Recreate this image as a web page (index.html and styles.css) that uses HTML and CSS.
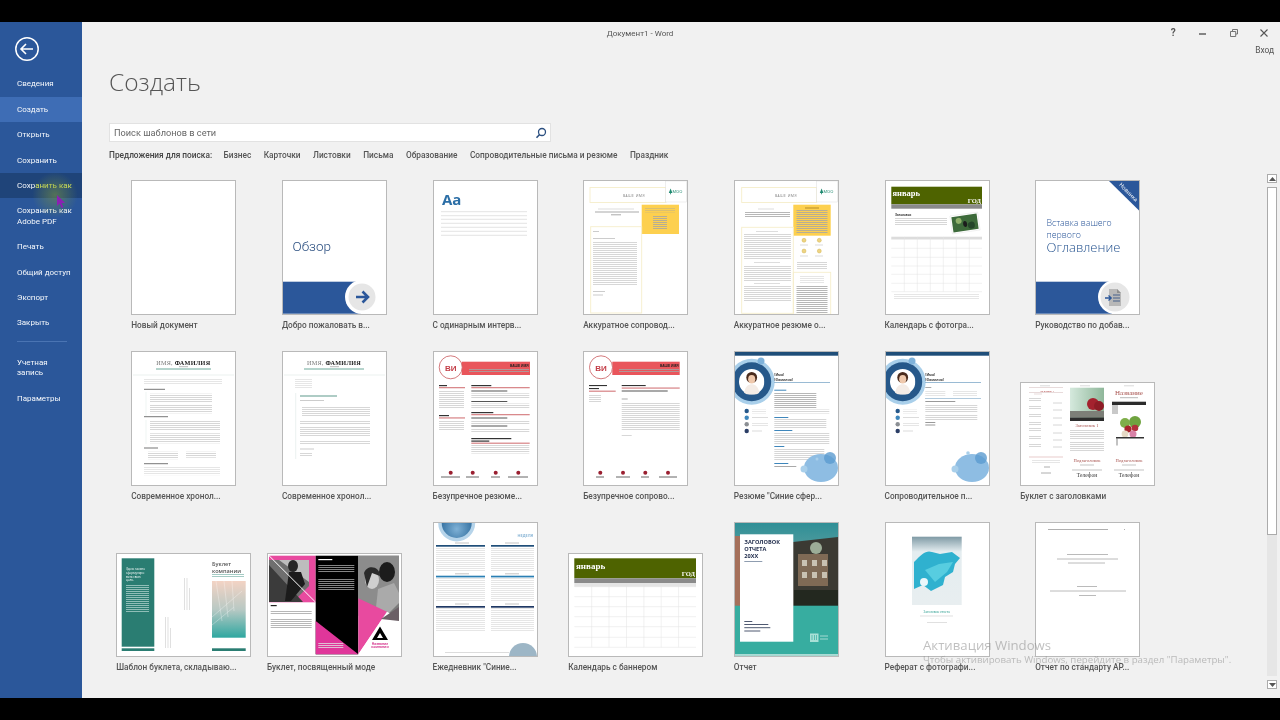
FILE: index.html
```html
<!DOCTYPE html>
<html lang="ru">
<head>
<meta charset="utf-8">
<title>Документ1 - Word</title>
<link rel="stylesheet" href="styles.css">
</head>
<body>
<svg class="defs" aria-hidden="true">
  <defs>
    <pattern id="tx" patternUnits="userSpaceOnUse" width="4" height="2"><rect width="4" height=".8" fill="#cdcdcd"/></pattern>
    <pattern id="txl" patternUnits="userSpaceOnUse" width="4" height="2"><rect width="4" height=".8" fill="#e0e0e0"/></pattern>
    <pattern id="txw" patternUnits="userSpaceOnUse" width="4" height="2"><rect width="4" height=".8" fill="#a9cfc8"/></pattern>
    <pattern id="txk" patternUnits="userSpaceOnUse" width="4" height="2"><rect width="4" height=".8" fill="#a5a5a5"/></pattern>
    <linearGradient id="gBld" x1="0" y1="0" x2="0" y2="1"><stop offset="0" stop-color="#f3d3c4"/><stop offset=".5" stop-color="#b9c9c4"/><stop offset="1" stop-color="#2ea7a0"/></linearGradient>
    <linearGradient id="gSky" x1="0" y1="0" x2="0" y2="1"><stop offset="0" stop-color="#2f8f96"/><stop offset="1" stop-color="#9db7b0"/></linearGradient>
    <linearGradient id="gIce" x1="0" y1="0" x2="0" y2="1"><stop offset="0" stop-color="#7f9aa5"/><stop offset=".22" stop-color="#e4edf0"/><stop offset="1" stop-color="#e8eef0"/></linearGradient>
    <linearGradient id="gApple" x1="0" y1="0" x2="1" y2="0"><stop offset="0" stop-color="#d5e9dd"/><stop offset="1" stop-color="#8fb79a"/></linearGradient>
    <radialGradient id="gBall" cx=".5" cy=".7" r=".7"><stop offset="0" stop-color="#7fb1d6"/><stop offset="1" stop-color="#1f5f92"/></radialGradient>
    <symbol id="head" viewBox="0 0 30 30">
      <circle cx="15" cy="15" r="15" fill="#fff"/>
      <ellipse cx="15" cy="10" rx="6.4" ry="6.6" fill="#4a2c1e"/>
      <ellipse cx="15" cy="12" rx="4.2" ry="5" fill="#efc9ad"/>
      <path d="M6 28c1-7 5-10 9-10s8 3 9 10a15 15 0 0 1-18 0z" fill="#f4ece6"/>
    </symbol>
    <symbol id="moo" viewBox="0 0 21 8">
      <path d="M2.6 1L4.4 5.6H.8z" fill="#1f8a70"/>
      <rect x="2.2" y="5.4" width=".8" height="1.4" fill="#1f8a70"/>
    </symbol>
  </defs>
</svg>

<div class="window">
  <aside class="sidebar">
    <div class="back">
      <svg width="26" height="26" viewBox="0 0 26 26"><circle cx="13" cy="13" r="11.2" fill="none" stroke="#fff" stroke-width="1.5"/><path d="M7 13h12M12 8l-5 5 5 5" fill="none" stroke="#fff" stroke-width="1.6"/></svg>
    </div>
    <nav class="nav">
      <a class="nav-item">Сведения</a>
      <a class="nav-item is-active">Создать</a>
      <a class="nav-item">Открыть</a>
      <a class="nav-item">Сохранить</a>
      <a class="nav-item is-hover">Сохр<span class="lit">анить как</span></a>
      <a class="nav-item">Сохранить как<br>Adobe PDF</a>
      <a class="nav-item">Печать</a>
      <a class="nav-item">Общий доступ</a>
      <a class="nav-item">Экспорт</a>
      <a class="nav-item">Закрыть</a>
      <div class="nav-sep"></div>
      <a class="nav-item">Учетная<br>запись</a>
      <a class="nav-item">Параметры</a>
    </nav>
    <div class="halo"></div>
    <svg class="cursor" width="10" height="14" viewBox="0 0 10 14"><path d="M1 0v11l2.6-2.4L5.6 13l1.8-.9L5.4 8H9z" fill="#8c1fb4"/></svg>
  </aside>

  <main class="main">
    <header class="titlebar">
      <div class="doc-title">Документ1 - Word</div>
      <div class="controls">
        <span class="ctl ctl-help">?</span>
        <svg class="ctl" width="10" height="10" viewBox="0 0 10 10"><path d="M1 6h7" stroke="#555" stroke-width="1.4"/></svg>
        <svg class="ctl" width="10" height="10" viewBox="0 0 10 10"><path d="M3.500 3V1.500h5V6H7M1.500 3.500h5.200V8.500H1.500z" fill="none" stroke="#666" stroke-width=".9"/></svg>
        <svg class="ctl" width="10" height="10" viewBox="0 0 10 10"><path d="M1.500 1.500l7 7M8.500 1.500l-7 7" stroke="#555" stroke-width="1.1"/></svg>
      </div>
    </header>
    <div class="signin">Вход</div>
    <h1 class="page-title">Создать</h1>
    <div class="search">
      <span class="search-text">Поиск шаблонов в сети</span>
      <svg width="12" height="12" viewBox="0 0 12 12"><circle cx="7" cy="5" r="3.500" fill="none" stroke="#2b4f80" stroke-width="1.300"/><path d="M4.600 7.500L1.500 10.800" stroke="#2b4f80" stroke-width="1.600"/></svg>
    </div>
    <div class="suggest">
      <span class="suggest-head">Предложения для поиска:</span>
      <span>Бизнес</span><span>Карточки</span><span>Листовки</span><span>Письма</span><span>Образование</span><span>Сопроводительные письма и резюме</span><span>Праздник</span>
    </div>

    <section class="gallery">
      <div class="grid">

        <div class="cell"><div class="card"><div class="thumb"></div><div class="label">Новый документ</div></div></div>

        <div class="cell"><div class="card"><div class="thumb"><svg class="pg" viewBox="1 1 103 133">
          <text x="10.500" y="71" class="obzor">Обзор</text>
          <rect x="1" y="101.700" width="78" height="32" fill="#2b579a"/>
          <circle cx="80" cy="117" r="17" fill="#fff"/><circle cx="80" cy="117" r="13.500" fill="#e6e6e6"/>
          <path d="M74 117h11M80.500 111.500l5.500 5.500-5.500 5.500" fill="none" stroke="#2b579a" stroke-width="2.600"/>
        </svg></div><div class="label">Добро пожаловать в...</div></div></div>

        <div class="cell"><div class="card"><div class="thumb"><svg class="pg" viewBox="1 1 103 133">
          <text x="9" y="24.500" class="aa">Aa</text>
          <path d="M8 31.700h86M8 35.700h86M8 39.300h86M8 43.300h86M8 47.300h86M8 51.300h86M8 55.300h86" stroke="#dcdcdc" stroke-width=".8"/>
        </svg></div><div class="label">С одинарным интерв...</div></div></div>

        <div class="cell"><div class="card"><div class="thumb"><svg class="pg" viewBox="1 1 103 133">
          <rect x="7" y="7.500" width="76" height="15" class="frame"/>
          <text x="51" y="16.500" class="name-sp">ВАШЕ ИМЯ</text>
          <rect x="82.700" y="1" width="21" height="21" fill="#fff" stroke="#dedede" stroke-width=".5"/>
          <use href="#moo" x="85" y="7.500" width="21" height="8"/><text x="89.500" y="13" class="moo">MOO</text>
          <rect x="58.700" y="24.700" width="37.300" height="29.300" fill="#fdd04f"/>
          <rect x="62" y="27.500" width="30" height="5" fill="url(#txk)" opacity=".5"/>
          <rect x="70" y="35" width="14" height="14" fill="url(#txk)"/>
          <rect x="15" y="28.500" width="36" height="1" fill="#ddd"/><rect x="12" y="31.500" width="44" height="1" fill="#aaa"/><rect x="28" y="34.300" width="10" height="1" fill="#aaa"/>
          <rect x="7.700" y="46.700" width="51" height="86.300" class="frame"/>
          <rect x="10" y="51" width="6" height="1" fill="#ccc"/><rect x="10" y="58" width="22" height="1" fill="#ccc"/>
          <rect x="10" y="61" width="44" height="44" fill="url(#tx)"/>
          <rect x="10" y="111" width="12" height="1" fill="#ccc"/><rect x="10" y="114.500" width="10" height="1" fill="#ccc"/>
        </svg></div><div class="label">Аккуратное сопровод...</div></div></div>

        <div class="cell"><div class="card"><div class="thumb"><svg class="pg" viewBox="1 1 103 133">
          <rect x="7.700" y="7.500" width="75" height="15" class="frame"/>
          <text x="52" y="16.500" class="name-sp">ВАШЕ ИМЯ</text>
          <rect x="82.700" y="1" width="21" height="21" fill="#fff" stroke="#dedede" stroke-width=".5"/>
          <use href="#moo" x="85" y="7.500" width="21" height="8"/><text x="89.500" y="13" class="moo">MOO</text>
          <rect x="59.300" y="24.700" width="37.400" height="31" fill="#fdd04f"/>
          <rect x="71" y="27.500" width="14" height="1" fill="#b58b2a"/><rect x="62.500" y="30" width="31" height="24" fill="url(#txk)"/>
          <rect x="24" y="28.500" width="16" height="1" fill="#ddd"/><rect x="11" y="31" width="45" height="7" fill="url(#txk)"/>
          <rect x="7.700" y="47.300" width="51.600" height="86" class="frame"/>
          <rect x="22" y="51" width="22" height="1" fill="#ddd"/><rect x="10" y="54" width="47" height="26" fill="url(#tx)"/>
          <rect x="20" y="82" width="26" height="1" fill="#ddd"/><rect x="10" y="85" width="47" height="17" fill="url(#tx)"/>
          <rect x="20" y="103" width="26" height="1" fill="#ddd"/><rect x="10" y="106" width="47" height="16" fill="url(#tx)"/>
          <g fill="#eed483" stroke="#c9a83a" stroke-width=".4"><circle cx="70" cy="60.300" r="2"/><circle cx="85.300" cy="60.300" r="2"/><circle cx="70" cy="71" r="2"/><circle cx="85.300" cy="71" r="2"/></g>
          <path d="M66 65h8M81 65h8M66 76h8M81 76h8" stroke="#ccc" stroke-width=".7"/>
          <rect x="63" y="82" width="30" height="8" fill="url(#tx)"/>
          <rect x="59.300" y="92.300" width="37.400" height="42" class="frame"/>
          <rect x="66" y="95" width="24" height="8" fill="url(#txl)"/><rect x="62.500" y="106" width="31" height="27" fill="url(#txk)"/>
        </svg></div><div class="label">Аккуратное резюме о...</div></div></div>

        <div class="cell"><div class="card"><div class="thumb"><svg class="pg" viewBox="1 1 103 133">
          <rect x="6.300" y="6.700" width="90.700" height="17.600" fill="#4e6300"/><rect x="6.300" y="24.300" width="90.700" height="4.400" fill="#8a8a8a"/>
          <text x="7.500" y="16" class="cal-m">январь</text><text x="96" y="22.500" class="cal-y">ГОД</text>
          <text x="10" y="36" class="cal-h">Заголовок</text>
          <rect x="10" y="37.500" width="52" height="8" fill="url(#tx)"/>
          <g transform="rotate(-8 80 43)"><rect x="66" y="34" width="28" height="18" fill="#fff" stroke="#ddd" stroke-width=".4"/><rect x="67.300" y="35.300" width="25.400" height="15.400" fill="#3d6a3a"/><circle cx="74" cy="40" r="3" fill="#8fb06a"/><circle cx="86" cy="46" r="3.500" fill="#25462a"/><ellipse cx="80" cy="44" rx="2" ry="3" fill="#1c1c1c"/></g>
          <rect x="6.300" y="56.700" width="90.700" height="2.600" fill="#dcdcdc"/>
          <path d="M6.300 59.300h90.700M6.300 68.300h90.700M6.300 77.300h90.700M6.300 86h90.700M6.300 94.300h90.700M6.300 103.300h90.700M6.300 111.700h90.700M19.300 56.700v55M32.300 56.700v55M45.300 56.700v55M58.300 56.700v55M71.300 56.700v55M84.300 56.700v55" class="cal-grid"/>
          <rect x="9" y="114" width="85" height="5.500" fill="url(#txl)"/>
        </svg></div><div class="label">Календарь с фотогра...</div></div></div>

        <div class="cell"><div class="card"><div class="thumb"><svg class="pg" viewBox="1 1 103 133">
          <path d="M74 1h30v29.500z" fill="#2b579a"/>
          <text class="newb" transform="translate(92.100 13.500) rotate(45)">Новинка</text>
          <text x="11.500" y="46" class="toc-s">Вставка вашего</text><text x="11.500" y="58" class="toc-s">первого</text><text x="11.500" y="72" class="toc-b">Оглавление</text>
          <rect x="1" y="101.700" width="76" height="32" fill="#2b579a"/>
          <circle cx="80" cy="117" r="17" fill="#fff"/><circle cx="80" cy="117" r="14.500" fill="#e6e6e6"/>
          <path d="M74 109h8l4 4v13H74z" fill="#b8b8b8"/><path d="M82 109l4 4h-4z" fill="#8e8e8e"/>
          <path d="M70 118h6M73.500 115.500l2.700 2.500-2.700 2.500" fill="none" stroke="#2b579a" stroke-width="1.300"/>
          <path d="M78 115h7M78 118h7M78 121h7" stroke="#47618a" stroke-width="1.100"/>
        </svg></div><div class="label">Руководство по добав...</div></div></div>

        <div class="cell"><div class="card"><div class="thumb"><svg class="pg" viewBox="1 1 103 133">
          <text x="52.300" y="14" class="res-name"><tspan class="res-l">ИМЯ, </tspan>ФАМИЛИЯ</text>
          <path d="M48 15.700h9" stroke="#aaa" stroke-width=".8"/><path d="M25 18h55" stroke="#6da99a" stroke-width="1"/><path d="M2 24h101" stroke="#e6eeeb" stroke-width=".8"/>
          <rect x="13" y="27.300" width="78" height="6" fill="url(#txl)"/>
          <rect x="13" y="37.800" width="21" height="1" fill="#777"/>
          <path d="M15 41v24M15 69v24" stroke="#dde8e5" stroke-width=".5"/>
          <rect x="19" y="42.700" width="62" height="8.500" fill="url(#tx)"/><rect x="19" y="53.300" width="62" height="9" fill="url(#tx)"/>
          <rect x="13" y="65.200" width="24" height="1" fill="#777"/>
          <rect x="19" y="70" width="70" height="10" fill="url(#tx)"/><rect x="19" y="82.300" width="70" height="10" fill="url(#tx)"/>
          <rect x="13" y="96.500" width="14" height="1" fill="#777"/>
          <rect x="17" y="100.700" width="30" height="7.500" fill="url(#tx)"/><rect x="55" y="100.700" width="30" height="6" fill="url(#tx)"/>
          <rect x="13" y="112.200" width="24" height="1" fill="#777"/>
          <rect x="13" y="115.700" width="76" height="8.500" fill="url(#txl)"/>
        </svg></div><div class="label">Современное хронол...</div></div></div>

        <div class="cell"><div class="card"><div class="thumb"><svg class="pg" viewBox="1 1 103 133">
          <text x="52" y="14" class="res-name"><tspan class="res-l">ИМЯ, </tspan>ФАМИЛИЯ</text>
          <path d="M48 15.700h9" stroke="#aaa" stroke-width=".8"/><path d="M22 18h60" stroke="#6da99a" stroke-width="1"/><path d="M2 24h101" stroke="#e6eeeb" stroke-width=".8"/>
          <rect x="13" y="27.300" width="17" height="10.500" fill="url(#txl)"/>
          <path d="M13.700 42v66" stroke="#dde8e5" stroke-width=".6"/>
          <rect x="18" y="44.500" width="37" height="1" fill="#5f9a8c"/>
          <rect x="18" y="49" width="24" height="1" fill="#ccc"/>
          <rect x="20" y="55.700" width="68" height="9.500" fill="url(#tx)"/>
          <rect x="18" y="69.500" width="70" height="4" fill="url(#tx)"/><rect x="18" y="76" width="70" height="10" fill="url(#tx)"/>
          <rect x="18" y="90" width="70" height="4" fill="url(#tx)"/><rect x="18" y="97.500" width="14" height="1" fill="#ccc"/>
          <rect x="18" y="102" width="12" height="3.500" fill="url(#tx)"/>
        </svg></div><div class="label">Современное хронол...</div></div></div>

        <div class="cell"><div class="card"><div class="thumb"><svg class="pg" viewBox="1 1 103 133">
          <rect x="28.700" y="10.700" width="68.300" height="13.300" fill="#e9555b"/>
          <circle cx="17.700" cy="16.300" r="11.500" fill="#fff" stroke="#c9585c" stroke-width=".8"/>
          <text x="17.700" y="19.500" class="vi">ВИ</text>
          <text x="95.500" y="15.500" class="vn">ВАШЕ ИМЯ</text>
          <rect x="36" y="17.500" width="60" height="4" fill="url(#txk)"/>
          <rect x="6" y="34" width="8" height="1.200" fill="#333"/><rect x="6" y="36.300" width="26" height=".9" fill="#c9585c"/>
          <rect x="6" y="39" width="25" height="18" fill="url(#tx)"/>
          <rect x="6" y="64" width="10" height="1.200" fill="#333"/><rect x="6" y="66.500" width="26" height=".9" fill="#c9585c"/>
          <rect x="6" y="69" width="25" height="10" fill="url(#tx)"/>
          <rect x="38.300" y="34" width="20" height="1.200" fill="#333"/><rect x="38.300" y="36.300" width="58.400" height=".9" fill="#c9585c"/>
          <rect x="38.300" y="39.500" width="36" height="1" fill="#555"/><rect x="38.300" y="42.300" width="58" height="5" fill="url(#tx)"/>
          <rect x="38.300" y="50" width="36" height="1" fill="#555"/><rect x="38.300" y="52.500" width="58" height="4.500" fill="url(#tx)"/>
          <rect x="38.300" y="61" width="22" height="1.200" fill="#333"/><rect x="38.300" y="63.300" width="58.400" height=".9" fill="#c9585c"/>
          <rect x="38.300" y="66.500" width="36" height="1" fill="#555"/><rect x="38.300" y="69" width="58" height="4" fill="url(#tx)"/>
          <rect x="38.300" y="74.500" width="36" height="1" fill="#555"/><rect x="38.300" y="77" width="58" height="4" fill="url(#tx)"/>
          <rect x="38.300" y="87" width="40" height="1.200" fill="#333"/><rect x="38.300" y="89.500" width="18" height="1.200" fill="#333"/><rect x="38.300" y="91.700" width="58.400" height=".9" fill="#c9585c"/>
          <rect x="38.300" y="94" width="58" height="8.500" fill="url(#tx)"/>
          <g fill="#9a1f30"><circle cx="17.700" cy="121.700" r="2"/><circle cx="39.700" cy="121.700" r="2"/><circle cx="62.700" cy="121.700" r="2"/><circle cx="85.300" cy="121.700" r="2"/></g>
          <path d="M8 126h19M33 126h13M58 126h9M75 126h20" stroke="#555" stroke-width=".9"/>
        </svg></div><div class="label">Безупречное резюме...</div></div></div>

        <div class="cell"><div class="card"><div class="thumb"><svg class="pg" viewBox="1 1 103 133">
          <rect x="29.300" y="10.700" width="67.400" height="13.300" fill="#e9555b"/>
          <circle cx="18" cy="16.300" r="11.500" fill="#fff" stroke="#c9585c" stroke-width=".8"/>
          <text x="18" y="19.500" class="vi">ВИ</text>
          <text x="95.500" y="15.500" class="vn">ВАШЕ ИМЯ</text>
          <rect x="36" y="17.500" width="60" height="4" fill="url(#txk)"/>
          <rect x="6" y="34" width="18" height="1.100" fill="#333"/><rect x="6" y="37" width="10" height="1.100" fill="#333"/><rect x="6" y="39.700" width="26.700" height=".9" fill="#c9585c"/>
          <rect x="6" y="43" width="12" height="8" fill="url(#tx)"/>
          <rect x="38.700" y="34" width="24" height="1.100" fill="#333"/><rect x="38.700" y="36.600" width="58" height=".9" fill="#c9585c"/>
          <rect x="38.700" y="39.500" width="46" height="1" fill="#555"/>
          <rect x="38.700" y="47.500" width="6" height="1" fill="#aaa"/>
          <rect x="38.700" y="51" width="58" height="29" fill="url(#tx)"/>
          <rect x="38.700" y="83" width="10" height="3" fill="url(#tx)"/>
          <g fill="#9a1f30"><circle cx="17.300" cy="121.700" r="2"/><circle cx="40" cy="121.700" r="2"/><circle cx="62.300" cy="121.700" r="2"/><circle cx="85" cy="121.700" r="2"/></g>
          <path d="M13 126h8M33 126h14M58 126h8M76 126h18" stroke="#555" stroke-width=".9"/>
        </svg></div><div class="label">Безупречное сопрово...</div></div></div>

        <div class="cell"><div class="card"><div class="thumb"><svg class="pg" viewBox="1 1 103 133">
          <circle cx="17.700" cy="30.700" r="23" fill="#a9cfea"/><circle cx="17.700" cy="30.700" r="19.500" fill="#26588a"/>
          <circle cx="27" cy="10" r="3.500" fill="#7fb2da"/>
          <use href="#head" x="5" y="18" width="25.400" height="25.400"/>
          <rect x="1" y=".7" width="103" height="4" fill="#1f4e79"/>
          <text x="40.300" y="24.700" class="ph">[Имя]</text><text x="40.300" y="29.700" class="ph">[Фамилия]</text>
          <path d="M40 31.500h56" stroke="#8fb3cf" stroke-width=".9"/>
          <rect x="40.300" y="38.700" width="12" height="1" fill="#3e86bb"/>
          <rect x="40.300" y="41" width="42" height="17" fill="url(#txk)"/><rect x="40.300" y="58.500" width="55" height="4" fill="url(#tx)"/>
          <rect x="40.300" y="66" width="14" height="1" fill="#3e86bb"/><rect x="40.300" y="68" width="52" height="9" fill="url(#tx)"/>
          <rect x="40.300" y="79" width="18" height="1" fill="#3e86bb"/><rect x="40.300" y="81" width="55" height="12" fill="url(#tx)"/>
          <rect x="40.300" y="95" width="10" height="1" fill="#3e86bb"/><rect x="40.300" y="97.500" width="50" height="12" fill="url(#tx)"/>
          <rect x="40.300" y="112" width="14" height="1" fill="#3e86bb"/><rect x="40.300" y="115" width="22" height="1" fill="#a9a9a9"/>
          <circle cx="12.700" cy="60" r="2.200" fill="#26588a"/><circle cx="12.700" cy="66.700" r="2.200" fill="#3e86bb"/><circle cx="12.700" cy="73.300" r="2.200" fill="#8b8f94"/><circle cx="12.700" cy="80" r="2.200" fill="#2b3e66"/>
          <rect x="18" y="58.500" width="14" height="4" fill="url(#txl)"/><rect x="18" y="66" width="16" height="1" fill="#dcdcdc"/><rect x="18" y="72" width="16" height="3" fill="url(#txl)"/><rect x="18" y="79.500" width="10" height="1" fill="#dcdcdc"/>
          <ellipse cx="87" cy="117" rx="17" ry="14" fill="#8ebde3"/><circle cx="96" cy="107" r="6" fill="#5b9bcf" opacity=".8"/><circle cx="70" cy="118" r="3.500" fill="#a9cfea"/><circle cx="83" cy="108" r="1.500" fill="#a9cfea"/>
        </svg></div><div class="label">Резюме "Синие сфер...</div></div></div>

        <div class="cell"><div class="card"><div class="thumb"><svg class="pg" viewBox="1 1 103 133">
          <circle cx="17.700" cy="30.700" r="23" fill="#a9cfea"/><circle cx="17.700" cy="30.700" r="19.500" fill="#26588a"/>
          <circle cx="27" cy="10" r="3.500" fill="#7fb2da"/>
          <use href="#head" x="5" y="18" width="25.400" height="25.400"/>
          <rect x="1" y=".7" width="103" height="4" fill="#1f4e79"/>
          <text x="40.300" y="24.700" class="ph">[Имя]</text><text x="40.300" y="29.700" class="ph">[Фамилия]</text>
          <path d="M40 31.500h56" stroke="#8fb3cf" stroke-width=".9"/>
          <rect x="40.300" y="36" width="6" height="1" fill="#a9a9a9"/>
          <rect x="40.300" y="40" width="20" height="6" fill="url(#txl)"/><rect x="68" y="40" width="24" height="6" fill="url(#txl)"/>
          <path d="M40 47.500h56" stroke="#8fb3cf" stroke-width=".7"/>
          <rect x="40.300" y="50" width="30" height="1" fill="#999"/>
          <rect x="40.300" y="53" width="52" height="8" fill="url(#tx)"/><rect x="40.300" y="63" width="52" height="6" fill="url(#tx)"/>
          <rect x="40.300" y="71" width="10" height="1" fill="#999"/><rect x="40.300" y="73.500" width="10" height="1" fill="#999"/>
          <circle cx="12.700" cy="60" r="2.200" fill="#26588a"/><circle cx="12.700" cy="66.700" r="2.200" fill="#3e86bb"/><circle cx="12.700" cy="73.300" r="2.200" fill="#8b8f94"/><circle cx="12.700" cy="80" r="2.200" fill="#2b3e66"/>
          <rect x="18" y="58.500" width="14" height="4" fill="url(#txl)"/><rect x="18" y="66" width="16" height="1" fill="#dcdcdc"/><rect x="18" y="72" width="16" height="3" fill="url(#txl)"/><rect x="18" y="79.500" width="10" height="1" fill="#dcdcdc"/>
          <ellipse cx="87" cy="117" rx="17" ry="14" fill="#8ebde3"/><circle cx="96" cy="107" r="6" fill="#5b9bcf" opacity=".8"/><circle cx="70" cy="118" r="3.500" fill="#a9cfea"/><circle cx="83" cy="102" r="1.800" fill="#a9cfea"/>
        </svg></div><div class="label">Сопроводительное п...</div></div></div>

        <div class="cell"><div class="card"><div class="thumb thumb-wide"><svg class="pg" viewBox="1 1 133 102">
          <path d="M20 3.800h10M60 3.800h10M104 3.800h10" stroke="#ccc" stroke-width=".7"/>
          <text x="27" y="9.500" class="bk-s">Заголовок 1</text>
          <path d="M9 5.500h34M9 10.500h34M14 12h8" stroke="#d8c3c3" stroke-width=".6"/>
          <rect x="9" y="16" width="12" height="4" fill="url(#tx)"/><rect x="9" y="24" width="12" height="4" fill="url(#tx)"/><rect x="9" y="31" width="12" height="4" fill="url(#tx)"/><rect x="9" y="39" width="12" height="4" fill="url(#tx)"/><rect x="9" y="46" width="12" height="4" fill="url(#tx)"/><rect x="9" y="54" width="12" height="4" fill="url(#tx)"/><rect x="9" y="61" width="12" height="4" fill="url(#tx)"/>
          <path d="M33 21h9M33 28h9M33 36h9M33 43h9M33 51h9M33 58h9M33 65h9" stroke="#ccc" stroke-width=".8"/>
          <path d="M9 75h34" stroke="#d8a9a9" stroke-width=".6"/><rect x="12" y="77" width="28" height="5" fill="url(#txl)"/>
          <path d="M24 85h6M21 91h10" stroke="#999" stroke-width=".8"/>
          <rect x="50" y="5.700" width="34" height="33.300" fill="url(#gApple)"/>
          <circle cx="73" cy="22" r="6" fill="#a4222e"/><circle cx="79" cy="24" r="5" fill="#8e1c26"/><rect x="50" y="29" width="34" height="6.500" fill="#7d7f78"/><rect x="50" y="35.500" width="34" height="3.500" fill="#2c2c2c"/>
          <text x="67" y="45" class="bk-h">Заголовок 1</text>
          <rect x="50" y="48" width="34" height="10" fill="url(#tx)"/><rect x="50" y="60" width="34" height="9.500" fill="url(#tx)"/>
          <text x="67" y="80" class="bk-h">Подзаголовок</text><path d="M60 83h14M52 88h30" stroke="#aaa" stroke-width=".7"/>
          <text x="67" y="94.500" class="bk-t">Телефон</text>
          <text x="109" y="13" class="bk-n">Название</text><path d="M100 15.700h18" stroke="#999" stroke-width=".7"/>
          <rect x="92" y="19.700" width="34" height="3.300" fill="#2c2c2c"/>
          <rect x="92" y="23" width="6" height="9" fill="#c9c9c9"/>
          <circle cx="115" cy="40" r="6" fill="#6fa33f"/><circle cx="105" cy="41" r="5" fill="#7fae4a"/>
          <circle cx="108" cy="47" r="3.600" fill="#a8242c"/><circle cx="115" cy="46" r="3.300" fill="#b22f3a"/><circle cx="105" cy="52" r="3.400" fill="#e5d9c5"/><circle cx="113" cy="52" r="3.500" fill="#d982a8"/><rect x="96" y="55" width="28" height="1.500" fill="#333"/><path d="M97 56.500v7" stroke="#333" stroke-width=".6"/>
          <text x="109" y="80" class="bk-h">Подзаголовок</text><path d="M102 83h14M94 88h30" stroke="#aaa" stroke-width=".7"/>
          <text x="109" y="94.500" class="bk-t">Телефон</text>
        </svg></div><div class="label">Буклет с заголовками</div></div></div>

        <div class="cell"><div class="card"><div class="thumb thumb-wide"><svg class="pg" viewBox="1 1 133 102">
          <rect x="5.700" y="5.300" width="32.600" height="88.400" fill="#2a7d72"/><rect x="5.700" y="95.300" width="32.600" height="2.700" fill="#2a7d72"/>
          <text class="tl-t" x="10" y="17">Здесь можно</text><text class="tl-t" x="10" y="20.800">сформулиро</text><text class="tl-t" x="10" y="24.600">вать свою</text><text class="tl-t" x="10" y="28.400">цель.</text>
          <rect x="10" y="31" width="23" height="29" fill="url(#txw)"/>
          <path d="M49.500 64v31M52 64v31M54.500 75v20M68.500 25v32M71 25v32M73.500 35v22" stroke="#d2d2d2" stroke-width=".7"/>
          <text x="96" y="13" class="tl-h">Буклет</text><text x="96" y="19.500" class="tl-h">компании</text>
          <path d="M96 21.500h32M96 23.500h32" stroke="#7cb5ab" stroke-width=".7"/>
          <rect x="96" y="28" width="33.700" height="56.700" fill="url(#gBld)"/>
          <path d="M100 28l6 40M108 28l4 36M116 28l2 30M96 72l22-18M96 64l30-26" stroke="#fff" stroke-width=".5" opacity=".6"/>
          <rect x="96" y="95.300" width="33.700" height="2.700" fill="#2a7d72"/>
        </svg></div><div class="label">Шаблон буклета, складываю...</div></div></div>

        <div class="cell"><div class="card"><div class="thumb thumb-wide"><svg class="pg" viewBox="1 1 133 102">
          <rect x="2" y="2.700" width="46.700" height="46.600" fill="#e84a9f"/>
          <path d="M2 7h40v26l-16 16H2z" fill="#6f6f6f"/>
          <path d="M2 7h40v22L12 7z" fill="#bdbdbd"/><path d="M2 12l34 37H2z" fill="#3b3b3b"/>
          <ellipse cx="26" cy="13" rx="5" ry="6" fill="#262626"/><path d="M18 48l4-29h12l4 12-14 17z" fill="#1b1b1b"/>
          <path d="M2 2.700l46.700 46.600" stroke="#fff" stroke-width="1"/>
          <rect x="3.700" y="52" width="6" height="1.200" fill="#222"/><rect x="3.700" y="57" width="41" height="5" fill="url(#txk)"/><rect x="3.700" y="65" width="41" height="10" fill="url(#txk)"/>
          <rect x="48.700" y="2.700" width="42.600" height="98.600" fill="#000"/>
          <path d="M48.700 68l42.600 33.300H48.700z" fill="#e0369a"/>
          <rect x="51.300" y="6" width="14" height="1.200" fill="#fff"/><rect x="51.300" y="11" width="36" height="8.500" fill="url(#txk)"/><rect x="51.300" y="25" width="36" height="12" fill="url(#txk)"/>
          <rect x="51.300" y="89" width="25" height="6" fill="url(#txl)"/>
          <rect x="91.300" y="2.700" width="40.700" height="60" fill="#7a7a7a"/>
          <path d="M91.300 2.700h40.700v40l-18 20H91.300z" fill="#8c8c8c"/>
          <ellipse cx="120" cy="19" rx="8" ry="10" fill="#1c1c1c"/><path d="M108 64l3-28 16-6 5 10v10l-14 14z" fill="#aaa"/>
          <ellipse cx="105" cy="27" rx="7" ry="9" fill="#cfcfcf"/><path d="M97 20c3-9 16-7 16 3l-8-3-5 14z" fill="#2a2a2a"/>
          <path d="M91.300 45.300L120 58.700 91.300 101.300z" fill="#e84a9f"/>
          <path d="M91.300 101.300L120 58.700 132 66v35.300z" fill="#fff"/>
          <path d="M114 66l18-12v14z" fill="#6b5f66"/>
          <path d="M113 73.500l8 13.500h-16zM113 80l-3 5h6z" fill="#000" fill-rule="evenodd"/>
          <text x="113" y="91.500" class="fs-t">Название</text><text x="113" y="95" class="fs-t">компании</text>
        </svg></div><div class="label">Буклет, посвященный моде</div></div></div>

        <div class="cell"><div class="card"><div class="thumb"><svg class="pg" viewBox="1 1 103 133">
          <circle cx="23.700" cy="1" r="18.500" fill="#b6d4ea"/><circle cx="23.700" cy="1" r="15" fill="url(#gBall)"/>
          <text x="100" y="15" class="wk">НЕДЕЛЯ</text>
          <g fill="#1f4e79"><rect x="3" y="23" width="49" height="1.700"/><rect x="58" y="23" width="43" height="1.700"/></g>
          <g fill="#2a7fb4"><rect x="3" y="53.700" width="49" height="1.700"/><rect x="58" y="53.700" width="43" height="1.700"/></g>
          <g fill="#1f3864"><rect x="3" y="84" width="49" height="1.700"/><rect x="58" y="84" width="43" height="1.700"/></g>
          <path d="M22 21h14M72 21h14M22 51.800h14M72 51.800h14M22 82h14M72 82h14" stroke="#aaa" stroke-width=".7"/>
          <g class="wk-lines"><rect x="3" y="25" width="49" height="24"/><rect x="58" y="25" width="43" height="24"/><rect x="3" y="56" width="49" height="24"/><rect x="58" y="56" width="43" height="24"/><rect x="3" y="86" width="49" height="24"/><rect x="58" y="86" width="43" height="24"/></g>
          <circle cx="90" cy="135" r="14" fill="#9db6c6"/>
          <path d="M12 130.500h64" stroke="#dcdcdc" stroke-width="1.200"/>
        </svg></div><div class="label">Ежедневник "Синие...</div></div></div>

        <div class="cell"><div class="card"><div class="thumb thumb-wide"><svg class="pg" viewBox="1 1 133 102">
          <rect x="6.300" y="5.300" width="121.700" height="20" fill="#4e6300"/><rect x="6.300" y="25.300" width="121.700" height="4.700" fill="#8a8a8a"/>
          <text x="8" y="16" class="cal-m2">январь</text><text x="127" y="23" class="cal-y2">ГОД</text>
          <rect x="6.300" y="30" width="121.700" height="3.700" fill="#e4e4e4"/>
          <path d="M6.300 33.700H128M6.300 43.700H128M6.300 53.700H128M6.300 63.700H128M6.300 73.700H128M6.300 84.300H128M6.300 94.300H128M23.700 30v64.300M41 30v64.300M58.500 30v64.300M75.900 30v64.300M93.200 30v64.300M110.600 30v64.300" class="cal-grid"/>
        </svg></div><div class="label">Календарь с баннером</div></div></div>

        <div class="cell"><div class="card"><div class="thumb"><svg class="pg" viewBox="1 1 103 133">
          <rect x="1" y="1" width="103" height="83" fill="url(#gSky)"/>
          <g class="soft">
            <path d="M59 20l45-5v69H59z" fill="#3b3a33"/><path d="M64 32h30v32H64z" fill="#7f6a55"/><path d="M68 38h5v6h-5zM78 38h5v6h-5zM88 38h5v6h-5zM68 50h5v6h-5zM78 50h5v6h-5zM88 50h5v6h-5z" fill="#c9c2b2"/><path d="M60 68h44v16H60z" fill="#23281f"/>
            <circle cx="82" cy="26" r="6" fill="#b5cbb0" opacity=".8"/>
          </g>
          <rect x="1" y="14" width="5" height="70" fill="#a5705b"/>
          <rect x="1" y="83.700" width="103" height="48.600" fill="#37ada0"/><rect x="1" y="132.300" width="103" height="2" fill="#a3d8d0"/>
          <rect x="6" y="12.300" width="53.300" height="107.400" fill="#fff"/>
          <text x="10.300" y="21.500" class="rp">ЗАГОЛОВОК</text><text x="10.300" y="28.500" class="rp">ОТЧЕТА</text><text x="10.300" y="36" class="rp">20XX</text>
          <path d="M10.300 39.500h18" stroke="#8f9db0" stroke-width="1"/>
          <path d="M10.300 99.500h8M10.300 102.500h24M10.300 105.700h26M10.300 109h16" stroke="#222e4d" stroke-width=".8"/>
          <rect x="76" y="111.500" width="8.500" height="8.500" fill="#a8e0d6"/><path d="M78 113v5M80.500 113v5M82.500 113v5" stroke="#37ada0" stroke-width=".7"/>
          <path d="M86 114h8M86 117h8" stroke="#bfe6df" stroke-width=".8"/>
        </svg></div><div class="label">Отчет</div></div></div>

        <div class="cell"><div class="card"><div class="thumb"><svg class="pg" viewBox="1 1 103 133">
          <rect x="27" y="14.700" width="49.700" height="68.300" fill="url(#gIce)"/>
          <g class="soft">
            <path d="M29 40c8-8 12-12 18-10l8 2 12-2 8 6-5 6-2 8-8 5-2 8-12 6-8-6-9 4z" fill="#2fb1cf"/>
            <path d="M40 48l14-6 14-2-6 10-12 10z" fill="#57cde0"/>
            <circle cx="39" cy="60" r="4" fill="#eaf7fb"/>
          </g>
          <text x="51.700" y="91" class="ice">Заголовок отчета</text>
          <path d="M35 94h33M42 100.500h20" stroke="#d2d2d2" stroke-width=".7"/>
        </svg></div><div class="label">Реферат с фотографи...</div></div></div>

        <div class="cell"><div class="card"><div class="thumb"><svg class="pg" viewBox="1 1 103 133">
          <path d="M13 7.500h60M89 7.500h1" stroke="#9a9a9a" stroke-width=".8"/>
          <path d="M32 32.500h41M22 37h61M33 41h37M42 64.500h20M15 69h76M44 73.500h17" stroke="#a8a8a8" stroke-width=".8"/>
        </svg></div><div class="label">Отчет по стандарту АР...</div></div></div>

      </div>
      <div class="scrollbar">
        <div class="sb-btn"><svg width="7" height="4" viewBox="0 0 7 4"><path d="M3.500 0L7 4H0z" fill="#555"/></svg></div>
        <div class="sb-track"><div class="sb-thumb"></div></div>
        <div class="sb-btn"><svg width="7" height="4" viewBox="0 0 7 4"><path d="M0 0h7L3.500 4z" fill="#555"/></svg></div>
      </div>
    </section>
    <div class="watermark">
      <div class="wm-1">Активация Windows</div>
      <div class="wm-2">Чтобы активировать Windows, перейдите в раздел "Параметры".</div>
    </div>
  </main>
</div>
</body>
</html>
```

FILE: styles.css
```css
* { box-sizing: border-box; }
html, body { margin: 0; height: 100%; }
body {
  width: 1280px;
  height: 720px;
  padding: 22px 0;
  background: #000;
  overflow: hidden;
  font-family: Roboto, "Open Sans", sans-serif;
}
.defs { display: block; width: 0; height: 0; }
.window { display: flex; height: 676px; background: #f1f1f1; overflow: hidden; filter: blur(.3px); }

/* Sidebar */
.sidebar { position: relative; width: 82px; flex: none; background: #2b579a; color: #fff; }
.back { height: 49.300px; padding: 14px 0 0 14px; }
.back svg { display: block; }
.nav { display: flex; flex-direction: column; }
.nav-item { display: block; padding: 8px 0 7px 17px; font-size: 8px; line-height: 10.400px; white-space: nowrap; color: #f4f7fb; }
.is-active { background: #3e6db5; }
.is-hover { background: #1f4479; }
.lit { color: #d9e85c; }
.nav-sep { height: 1px; margin: 5.500px 15px 7.600px 17px; background: #4a74b3; }
.halo { position: absolute; left: 32px; top: 150px; width: 46px; height: 46px; border-radius: 50%; background: radial-gradient(circle, rgba(125,150,60,.55), rgba(125,150,60,0) 70%); }
.cursor { position: absolute; left: 56px; top: 173px; }

/* Main */
.main { position: relative; flex: 1; min-width: 0; display: flex; flex-direction: column; }
.titlebar { position: relative; height: 22px; display: flex; justify-content: center; align-items: center; padding-right: 82px; }
.doc-title { font-size: 8px; color: #555; }
.controls { position: absolute; right: 0; top: 0; height: 22px; width: 122px; display: grid; grid-template-columns: repeat(4, 30.300px); align-items: center; justify-items: center; }
.ctl { display: block; }
.ctl-help { font-size: 10px; font-weight: 700; color: #555; line-height: 10px; }
.signin { height: 12px; text-align: right; padding-right: 6px; font-size: 8.400px; line-height: 12px; color: #555; }
.page-title { margin: 6px 0 0 27px; height: 40px; font-family: "Open Sans", sans-serif; font-size: 24.500px; line-height: 40px; font-weight: 300; color: #555; }
.search { margin: 21px 0 0 27px; width: 442px; height: 19px; display: flex; align-items: center; justify-content: space-between; padding: 0 3px 0 4px; background: #fff; border: 1px solid #e2e2e2; }
.search-text { font-size: 9.200px; color: #666; }
.suggest { margin: 7px 0 0 27px; height: 13px; display: flex; gap: 12.500px; font-size: 8.300px; line-height: 13px; font-weight: 500; color: #555; white-space: nowrap; }
.suggest-head { color: #444; margin-right: -1px; }

/* Gallery */
.gallery { flex: 1; min-height: 0; margin-top: 12px; padding-left: 26.400px; display: flex; justify-content: space-between; }
.grid { padding-top: 6px; display: grid; grid-template-columns: repeat(7, 150.670px); grid-auto-rows: 171px; }
.cell { display: flex; flex-direction: column; justify-content: flex-end; align-items: center; }
.card { display: flex; flex-direction: column; }
.thumb { width: 105px; height: 135px; background: #fff; border: 1px solid #b9b9b9; }
.thumb-wide { width: 135px; height: 104px; }
.pg { display: block; width: 100%; height: 100%; filter: blur(.2px); }
.soft { filter: blur(.7px); }
.label { height: 36px; padding-top: 1px; font-size: 8.250px; line-height: 18px; font-weight: 500; color: #555; white-space: nowrap; width: 0; }

/* Scrollbar */
.scrollbar { width: 10px; margin: 0 3px 9px 0; display: flex; flex-direction: column; gap: 4px; }
.sb-btn { height: 9px; display: flex; align-items: center; justify-content: center; background: #fff; border: 1px solid #ababab; }
.sb-track { flex: 1; background: #e6e6e6; }
.sb-thumb { height: 348px; background: #fff; border: 1px solid #ababab; }

/* Watermark */
.watermark { position: absolute; left: 841px; top: 615px; color: rgba(140,140,140,.55); pointer-events: none; white-space: nowrap; font-family: "Open Sans", sans-serif; }
.wm-1 { font-size: 13.200px; line-height: 16px; }
.wm-2 { font-size: 9.700px; line-height: 14px; }

/* Text inside the template previews */
.frame { fill: none; stroke: #f6eecb; stroke-width: .9; }
.obzor { font: 300 13.500px Roboto, sans-serif; fill: #2b4f80; }
.aa { font: 700 15px "Open Sans", sans-serif; fill: #2b6ea6; }
.name-sp { font: 3.200px "Open Sans", sans-serif; letter-spacing: .6px; fill: #777; text-anchor: middle; }
.moo { font: 4px "Open Sans", sans-serif; fill: #1f8a70; }
.cal-m { font: 700 8.500px "Liberation Serif", serif; fill: #fff; }
.cal-y { font: 700 6.500px "Liberation Serif", serif; fill: #fff; text-anchor: end; }
.cal-m2 { font: 700 9px "Liberation Serif", serif; fill: #fff; }
.cal-y2 { font: 700 6.500px "Liberation Serif", serif; fill: #fff; text-anchor: end; }
.cal-h { font: 700 3px "Open Sans", sans-serif; fill: #333; }
.cal-grid { fill: none; stroke: #e2e2e2; stroke-width: .5; }
.newb { font: 5.600px "Open Sans", sans-serif; fill: #fff; text-anchor: middle; }
.toc-s { font: 300 8.800px "Open Sans", sans-serif; fill: #2b579a; }
.toc-b { font: 300 13px "Open Sans", sans-serif; fill: #1f4e8c; }
.res-name { font: 700 6.200px "Liberation Serif", serif; fill: #222; text-anchor: middle; letter-spacing: .25px; }
.res-l { font-weight: 400; fill: #777; }
.vi { font: 700 8px "Liberation Sans", sans-serif; fill: #c33c46; text-anchor: middle; }
.vn { font: 700 3.300px "Liberation Sans", sans-serif; fill: #222; text-anchor: end; }
.ph { font: 700 3.300px "Open Sans", sans-serif; fill: #444; }
.bk-s { font: 2.800px "Liberation Serif", serif; fill: #a33; text-anchor: middle; }
.bk-h { font: 4.600px "Liberation Serif", serif; fill: #a8534f; text-anchor: middle; }
.bk-t { font: 5.600px "Liberation Serif", serif; fill: #333; text-anchor: middle; }
.bk-n { font: 7px "Liberation Serif", serif; fill: #a8534f; text-anchor: middle; }
.tl-t { font: 3px "Open Sans", sans-serif; fill: #fff; }
.tl-h { font: 600 5.600px "Open Sans", sans-serif; fill: #555; }
.fs-t { font: 700 3.200px "Open Sans", sans-serif; fill: #d63a90; text-anchor: middle; }
.wk { font: 4px "Open Sans", sans-serif; fill: #3e86bb; text-anchor: end; }
.wk-lines rect { fill: url(#txl); }
.rp { font: 700 5.600px "Open Sans", sans-serif; fill: #222e4d; }
.ice { font: 3.600px "Liberation Serif", serif; fill: #2a9d8f; text-anchor: middle; }
```
